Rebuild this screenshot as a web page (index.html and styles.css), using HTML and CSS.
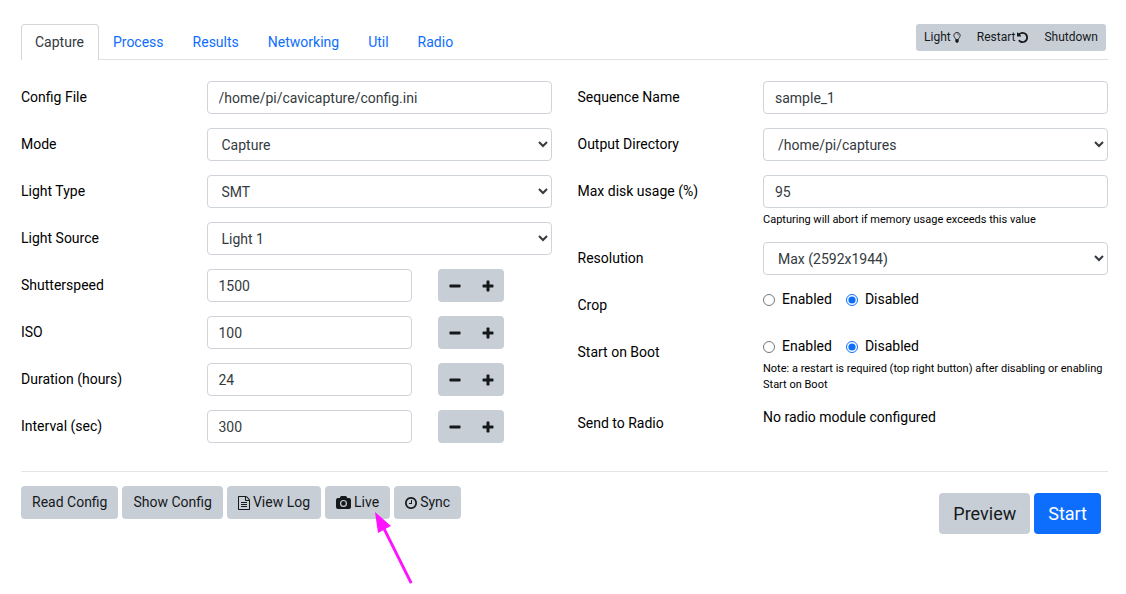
FILE: index.html
```html
<!DOCTYPE html>
<html lang="en">
<head>
<meta charset="utf-8">
<meta name="viewport" content="width=device-width, initial-scale=1">
<title>Capture</title>
<link rel="stylesheet" href="styles.css">
</head>
<body>
<svg class="sprite" aria-hidden="true">
  <symbol id="minus" viewBox="0 0 12 12"><rect x="0.5" y="4.5" width="11" height="3" rx="0.7"/></symbol>
  <symbol id="plus" viewBox="0 0 12 12"><path d="M5.2 0.5h1.6q.7 0 .7.7v3.3h3.3q.7 0 .7.7v1.6q0 .7-.7.7H7.5v3.3q0 .7-.7.7H5.2q-.7 0-.7-.7V7.5H1.2q-.7 0-.7-.7V5.2q0-.7.7-.7h3.3V1.2q0-.7.7-.7z"/></symbol>
</svg>
<main class="page">
  <header class="topbar">
    <nav class="tabs">
      <a class="tab tab-active" href="#capture" aria-current="page">Capture</a>
      <a class="tab" href="#process">Process</a>
      <a class="tab" href="#results">Results</a>
      <a class="tab" href="#networking">Networking</a>
      <a class="tab" href="#util">Util</a>
      <a class="tab" href="#radio">Radio</a>
    </nav>
    <div class="system">
      <button class="system-btn" type="button">Light
        <svg class="icon-bulb" viewBox="0 0 8 12" aria-hidden="true"><path d="M2.6 8.2C2.5 6.7.6 5.8.6 3.8.6 1.9 2.2.6 4 .6s3.400 1.300 3.400 3.200C7.400 5.800 5.500 6.700 5.400 8.200z" fill="none" stroke="currentColor"/><path d="M4 2.100q1.600 0 1.800 1.500" fill="none" stroke="currentColor" stroke-width=".6"/><path d="M2.200 8.500h3.600v2.100l-1.100 1.200H3.300l-1.100-1.200z"/></svg></button>
      <button class="system-btn" type="button">Restart
        <svg class="icon-undo" viewBox="128 128 1536 1536" aria-hidden="true"><path d="M1664 896q0 156-61 298t-164 245-245 164-298 61q-172 0-327-72.500t-264-204.500q-7-10-6.500-22.500t8.500-20.500l137-138q10-9 25-9 16 2 23 12 73 95 179 147t225 52q104 0 198.500-40.500t163.500-109.500 109.500-163.500 40.500-198.500-40.500-198.500-109.500-163.500-163.500-109.500-198.500-40.500q-98 0-188 35.500t-160 101.500l137 138q31 30 14 69-17 40-59 40h-448q-26 0-45-19t-19-45v-448q0-42 40-59 39-17 69 14l130 129q107-101 244.500-156.500t284.500-55.500q156 0 298 61t245 164 164 245 61 298z"/></svg></button>
      <button class="system-btn" type="button">Shutdown</button>
    </div>
  </header>

  <form class="settings">
    <div class="column">
      <div class="row">
        <label class="label" for="config">Config File</label>
        <input class="control wide" id="config" type="text" value="/home/pi/cavicapture/config.ini">
      </div>
      <div class="row">
        <label class="label" for="mode">Mode</label>
        <select class="control wide" id="mode"><option>Capture</option></select>
      </div>
      <div class="row">
        <label class="label" for="light-type">Light Type</label>
        <select class="control wide" id="light-type"><option>SMT</option></select>
      </div>
      <div class="row">
        <label class="label" for="light-source">Light Source</label>
        <select class="control wide" id="light-source"><option>Light 1</option></select>
      </div>
      <div class="row">
        <label class="label" for="shutter">Shutterspeed</label>
        <input class="control narrow" id="shutter" type="text" value="1500">
        <div class="stepper">
          <button class="step" type="button" aria-label="Decrease shutterspeed"><svg><use href="#minus"/></svg></button>
          <button class="step" type="button" aria-label="Increase shutterspeed"><svg><use href="#plus"/></svg></button>
        </div>
      </div>
      <div class="row">
        <label class="label" for="iso">ISO</label>
        <input class="control narrow" id="iso" type="text" value="100">
        <div class="stepper">
          <button class="step" type="button" aria-label="Decrease ISO"><svg><use href="#minus"/></svg></button>
          <button class="step" type="button" aria-label="Increase ISO"><svg><use href="#plus"/></svg></button>
        </div>
      </div>
      <div class="row">
        <label class="label" for="duration">Duration (hours)</label>
        <input class="control narrow" id="duration" type="text" value="24">
        <div class="stepper">
          <button class="step" type="button" aria-label="Decrease duration"><svg><use href="#minus"/></svg></button>
          <button class="step" type="button" aria-label="Increase duration"><svg><use href="#plus"/></svg></button>
        </div>
      </div>
      <div class="row">
        <label class="label" for="interval">Interval (sec)</label>
        <input class="control narrow" id="interval" type="text" value="300">
        <div class="stepper">
          <button class="step" type="button" aria-label="Decrease interval"><svg><use href="#minus"/></svg></button>
          <button class="step" type="button" aria-label="Increase interval"><svg><use href="#plus"/></svg></button>
        </div>
      </div>
    </div>

    <div class="column">
      <div class="row">
        <label class="label" for="sequence">Sequence Name</label>
        <input class="control wide" id="sequence" type="text" value="sample_1">
      </div>
      <div class="row">
        <label class="label" for="output">Output Directory</label>
        <select class="control wide" id="output"><option>/home/pi/captures</option></select>
      </div>
      <div class="row">
        <label class="label" for="disk">Max disk usage (%)</label>
        <div class="wide">
          <input class="control" id="disk" type="text" value="95">
          <p class="note">Capturing will abort if memory usage exceeds this value</p>
        </div>
      </div>
      <div class="row">
        <label class="label" for="resolution">Resolution</label>
        <select class="control wide" id="resolution"><option>Max (2592x1944)</option></select>
      </div>
      <div class="row" role="radiogroup" aria-labelledby="crop-label">
        <span class="label" id="crop-label">Crop</span>
        <div class="wide radios">
          <label class="radio"><input type="radio" name="crop">Enabled</label>
          <label class="radio"><input type="radio" name="crop" checked>Disabled</label>
        </div>
      </div>
      <div class="row" role="radiogroup" aria-labelledby="boot-label">
        <span class="label" id="boot-label">Start on Boot</span>
        <div class="wide">
          <div class="radios">
            <label class="radio"><input type="radio" name="boot">Enabled</label>
            <label class="radio"><input type="radio" name="boot" checked>Disabled</label>
          </div>
          <p class="note">Note: a restart is required (top right button) after disabling or enabling Start on Boot</p>
        </div>
      </div>
      <div class="row">
        <span class="label">Send to Radio</span>
        <span class="wide">No radio module configured</span>
      </div>
    </div>
  </form>

  <footer class="actions">
    <div class="tools">
      <button class="btn" type="button">Read Config</button>
      <button class="btn" type="button">Show Config</button>
      <button class="btn" type="button"><svg class="icon-file" viewBox="128 0 1536 1792" aria-hidden="true"><path d="M1596 380q28 28 48 76t20 88v1152q0 40-28 68t-68 28h-1344q-40 0-68-28t-28-68v-1600q0-40 28-68t68-28h896q40 0 88 20t76 48zm-444-244v376h376q-10-29-22-41l-313-313q-12-12-41-22zm384 1528v-1024h-416q-40 0-68-28t-28-68v-416h-768v1536h1280zm-1024-864q0-14 9-23t23-9h704q14 0 23 9t9 23v64q0 14-9 23t-23 9h-704q-14 0-23-9t-9-23v-64zm736 224q14 0 23 9t9 23v64q0 14-9 23t-23 9h-704q-14 0-23-9t-9-23v-64q0-14 9-23t23-9h704zm0 256q14 0 23 9t9 23v64q0 14-9 23t-23 9h-704q-14 0-23-9t-9-23v-64q0-14 9-23t23-9h704z"/></svg>View Log</button>
      <div class="live">
        <button class="btn" type="button"><svg class="icon-camera" viewBox="0 0 15 13" aria-hidden="true"><path fill-rule="evenodd" d="M2 2h1.800l.5-1.200Q4.600 0 5.500 0h4q.9 0 1.200.8l.5 1.200H13q2 0 2 2v7q0 2-2 2H2q-2 0-2-2V4q0-2 2-2zm5.500 1.900a3.500 3.500 0 1 0 0 7 3.500 3.500 0 1 0 0-7zm0 1.200a2.300 2.300 0 1 1 0 4.600 2.300 2.300 0 1 1 0-4.600z"/></svg>Live</button>
        <svg class="pointer" viewBox="0 0 40 74" aria-hidden="true"><path d="M0 0l16 14-5.300 2.800L37.500 70.500l-2.600 1.300L8.200 18.200 3 21z"/></svg>
      </div>
      <button class="btn" type="button"><svg class="icon-clock" viewBox="128 128 1536 1536" aria-hidden="true"><path d="M1024 544v448q0 14-9 23t-23 9h-320q-14 0-23-9t-9-23v-64q0-14 9-23t23-9h224v-352q0-14 9-23t23-9h64q14 0 23 9t9 23zm416 352q0-148-73-273t-198-198-273-73-273 73-198 198-73 273 73 273 198 198 273 73 273-73 198-198 73-273zm224 0q0 209-103 385.500t-279.500 279.500-385.500 103-385.500-103-279.500-279.500-103-385.500 103-385.500 279.500-279.500 385.500-103 385.500 103 279.500 279.500 103 385.500z"/></svg>Sync</button>
    </div>
    <div class="run">
      <button class="btn btn-large" type="button">Preview</button>
      <button class="btn btn-large btn-primary" type="button">Start</button>
    </div>
  </footer>
</main>
</body>
</html>
```

FILE: styles.css
```css
*, *::before, *::after { box-sizing: border-box; }

body {
  margin: 0;
  background: #fff;
  color: #000;
  font-family: Roboto, "Liberation Sans", sans-serif;
  font-size: 14px;
  line-height: 21px;
}

button, input, select { font: inherit; }
button svg { fill: currentColor; }
.sprite { display: none; }

.page { min-height: 100vh; padding: 24px 18px 0 21px; }

/* Header */
.topbar {
  display: flex;
  justify-content: space-between;
  align-items: flex-start;
  border-bottom: 1px solid #dee2e6;
}
.tabs { display: flex; margin-bottom: -1px; }
.tab {
  padding: 7px 14px 7px 13px;
  border: 1px solid transparent;
  border-bottom: 0;
  border-radius: 4px 4px 0 0;
  color: #0d6efd;
  text-decoration: none;
}
.tab-active {
  border-color: #d3d7da;
  background: #fff;
  color: #343a40;
}
.system {
  display: flex;
  margin-right: 2px;
  border-radius: 3px;
  background: #c8ced6;
}
.system-btn {
  display: flex;
  align-items: center;
  gap: 2px;
  padding: 4px 8px;
  border: 0;
  background: none;
  color: #16191c;
  font-size: 12px;
  line-height: 19px;
}
.icon-bulb { width: 8px; height: 11px; }
.icon-undo { width: 11px; height: 11px; }

/* Settings */
.settings {
  display: grid;
  grid-template-columns: 1fr 1fr;
  gap: 26px;
  padding: 21px 0 28px;
  border-bottom: 1px solid #e3e4e5;
}
.column { display: flex; flex-direction: column; gap: 14px; }
.row {
  display: grid;
  grid-template-columns: repeat(12, minmax(0, 1fr));
  column-gap: 26px;
  align-items: start;
}
.label { grid-column: span 4; padding: 6px 0; white-space: nowrap; }
.wide { grid-column: span 8; }
.narrow { grid-column: span 5; }
.control {
  width: 100%;
  height: 33px;
  padding: 5px 11px;
  border: 1px solid #ced4da;
  border-radius: 4px;
  background: #fff;
  color: #343a40;
}
select.control { padding: 5px 0 5px 10px; }
.note { margin: 4px 0 0; font-size: 11px; line-height: 16px; }
.radios { display: flex; gap: 14px; }
.radio { display: flex; align-items: center; gap: 7px; }
.radio input { width: 12px; height: 12px; margin: 0; accent-color: #0d6efd; }

.stepper {
  display: flex;
  grid-column: span 3;
  justify-self: start;
  border-radius: 4px;
  background: #c8ced6;
}
.step {
  display: flex;
  align-items: center;
  justify-content: center;
  width: 33px;
  height: 33px;
  padding: 0;
  border: 0;
  background: none;
  color: #16191c;
}
.step svg { width: 12px; height: 12px; }

/* Footer */
.actions {
  display: flex;
  justify-content: space-between;
  align-items: flex-start;
  padding: 14px 7px 14px 0;
}
.tools, .run { display: flex; align-items: flex-start; gap: 4px; }
.run { padding-top: 7px; }
.btn {
  display: flex;
  align-items: center;
  gap: 3px;
  padding: 6px 11px;
  border: 0;
  border-radius: 4px;
  background: #c8ced6;
  color: #16191c;
  white-space: nowrap;
}
.btn-large { padding: 7px 14px; font-size: 18px; line-height: 27px; }
.btn-primary { background: #0d6efd; color: #fff; }
.icon-file { width: 12px; height: 14px; }
.icon-camera { width: 15px; height: 13px; }
.icon-clock { width: 12px; height: 12px; }

.live { position: relative; }
.pointer {
  position: absolute;
  top: 26px;
  left: 50px;
  width: 40px;
  height: 74px;
  fill: #ff12ff;
  pointer-events: none;
}
```
